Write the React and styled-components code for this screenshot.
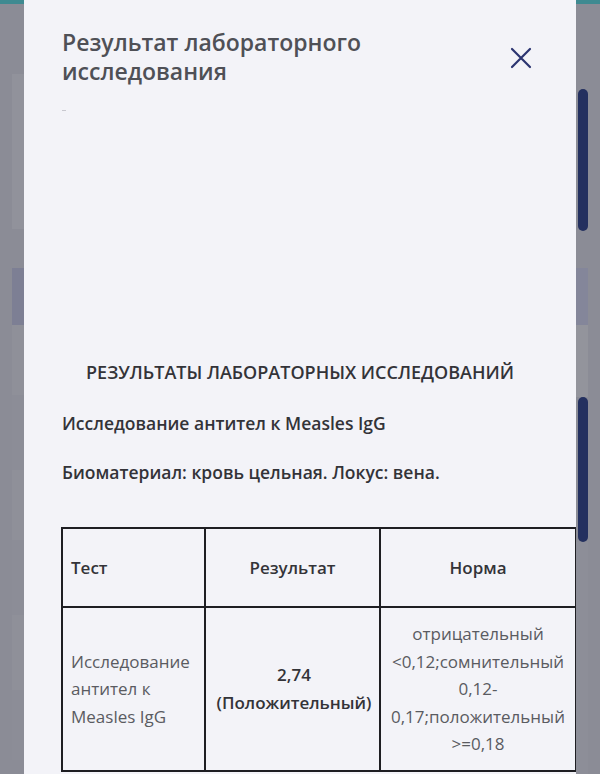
import React from "react";
import styled, { createGlobalStyle } from "styled-components";

const Global = createGlobalStyle`
  html, body { margin: 0; padding: 0; }
  body {
    width: 600px;
    height: 774px;
    overflow: hidden;
    background: #8b8c96;
    font-family: "Open Sans", Lato, sans-serif;
  }
`;

const Screen = styled.div`
  display: flex;
  width: 600px;
  height: 774px;
  overflow: hidden;
  background: #8b8c96;
`;

const Gutter = styled.div`
  width: 24px;
  flex: none;
  display: flex;
  flex-direction: column;
  background: #8b8c96;
`;

const TopStrip = styled.div`
  height: 4px;
  flex: none;
  background: #3f8a91;
`;

const Fragment = styled.div`
  flex: none;
  height: ${(p) => p.$h}px;
  margin-left: ${(p) => p.$ml || 0}px;
  margin-right: ${(p) => p.$mr || 0}px;
  background: ${(p) => p.$bg};
  border-radius: ${(p) => p.$r || 0}px;
`;

const Modal = styled.div`
  width: 552px;
  flex: none;
  background: #f3f3f8;
  padding: 28px 0 0 38px;
  box-sizing: border-box;
  display: flex;
  flex-direction: column;
  overflow: hidden;
`;

const Header = styled.div`
  display: flex;
  align-items: center;
  justify-content: space-between;
  padding-right: 42px;
`;

const Title = styled.h2`
  margin: 0;
  font-size: 23px;
  line-height: 29px;
  font-weight: 600;
  color: #4f5056;
`;

const CloseButton = styled.button`
  border: none;
  background: transparent;
  padding: 0;
  width: 26px;
  height: 26px;
  display: flex;
  align-items: center;
  justify-content: center;
  margin-top: 2px;
  cursor: pointer;
`;

const Mark = styled.div`
  width: 4px;
  height: 1px;
  background: #c8c8cf;
  margin-top: 24px;
`;

const Body = styled.div`
  display: flex;
  flex-direction: column;
  margin-top: 250px;
  padding-right: 38px;
`;

const SectionTitle = styled.div`
  text-align: center;
  font-size: 18px;
  line-height: 22px;
  font-weight: 600;
  color: #333338;
  text-transform: uppercase;
`;

const InfoLine = styled.div`
  font-size: 17.5px;
  line-height: 22px;
  font-weight: 600;
  color: #333338;
  margin-top: ${(p) => p.$mt}px;
`;

const TableWrap = styled.div`
  margin-top: 44px;
  margin-left: -1px;
  overflow: hidden;
`;

const Table = styled.table`
  border-collapse: collapse;
  table-layout: fixed;
  width: 514px;
  font-size: 17px;
  line-height: 27.5px;
`;

const Th = styled.th`
  border: 2px solid #1e1e22;
  height: 77px;
  padding: 0 8px;
  font-weight: 600;
  color: #333338;
  text-align: ${(p) => p.$align || "center"};
  vertical-align: middle;
`;

const Td = styled.td`
  border: 2px solid #1e1e22;
  height: 161px;
  padding: 12px 5px 12px 8px;
  color: ${(p) => (p.$strong ? "#333338" : "#5a5b61")};
  font-weight: ${(p) => (p.$strong ? 600 : 400)};
  text-align: ${(p) => p.$align || "center"};
  vertical-align: middle;
  box-sizing: border-box;
`;

const NormTd = styled(Td)`
  padding: 12px 3px;
`;

function CloseIcon() {
  return (
    <svg width="22" height="22" viewBox="0 0 22 22" fill="none">
      <path d="M2 2 L20 20 M20 2 L2 20" stroke="#2b3470" strokeWidth="2.2" strokeLinecap="round" />
    </svg>
  );
}

export default function App() {
  return (
    <>
      <Global />
      <Screen>
        <Gutter>
          <TopStrip />
          <Fragment $h={70} $bg="#8b8c96" />
          <Fragment $h={155} $ml={12} $bg="#91929b" />
          <Fragment $h={39} $ml={12} $bg="#8b8c96" />
          <Fragment $h={57} $ml={12} $bg="#7d7f94" />
          <Fragment $h={70} $ml={12} $bg="#8f9099" />
          <Fragment $h={75} $ml={12} $bg="#8c8d97" />
          <Fragment $h={70} $ml={12} $bg="#8f9099" />
          <Fragment $h={75} $ml={12} $bg="#8c8d97" />
          <Fragment $h={75} $ml={12} $bg="#8f9099" />
          <Fragment $h={70} $ml={12} $bg="#8c8d97" />
        </Gutter>
        <Modal>
          <Header>
            <Title>
              Результат лабораторного
              <br />
              исследования
            </Title>
            <CloseButton aria-label="Закрыть">
              <CloseIcon />
            </CloseButton>
          </Header>
          <Mark />
          <Body>
            <SectionTitle>Результаты лабораторных исследований</SectionTitle>
            <InfoLine $mt={29}>Исследование антител к Measles IgG</InfoLine>
            <InfoLine $mt={27}>Биоматериал: кровь цельная. Локус: вена.</InfoLine>
          </Body>
          <TableWrap>
            <Table>
              <colgroup>
                <col style={{ width: 143 }} />
                <col style={{ width: 175 }} />
                <col style={{ width: 196 }} />
              </colgroup>
              <thead>
                <tr>
                  <Th $align="left">Тест</Th>
                  <Th>Результат</Th>
                  <Th>Норма</Th>
                </tr>
              </thead>
              <tbody>
                <tr>
                  <Td $align="left">Исследование антител к Measles IgG</Td>
                  <Td $strong>
                    2,74
                    <br />
                    (Положительный)
                  </Td>
                  <NormTd>
                    отрицательный &lt;0,12;сомнительный 0,12-0,17;положительный &gt;=0,18
                  </NormTd>
                </tr>
              </tbody>
            </Table>
          </TableWrap>
        </Modal>
        <Gutter>
          <TopStrip />
          <Fragment $h={85} $bg="#8b8c96" />
          <Fragment $h={142} $ml={2} $mr={12} $r={7} $bg="#24305f" />
          <Fragment $h={37} $bg="#8b8c96" />
          <Fragment $h={57} $mr={12} $bg="#84869a" />
          <Fragment $h={72} $mr={12} $bg="#93949c" />
          <Fragment $h={145} $ml={2} $mr={12} $r={7} $bg="#24305f" />
          <Fragment $h={232} $mr={12} $bg="#8d8e98" />
        </Gutter>
      </Screen>
    </>
  );
}
